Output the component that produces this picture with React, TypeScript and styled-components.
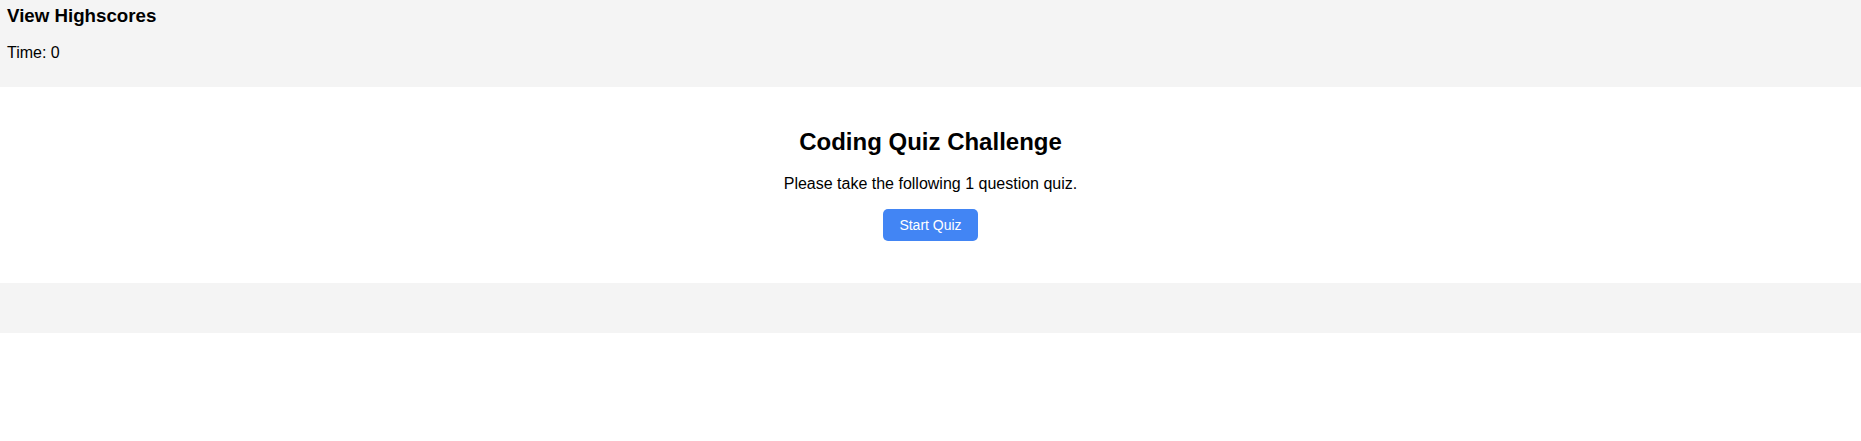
import React from 'react';
import styled, { createGlobalStyle } from 'styled-components';

const GlobalStyle = createGlobalStyle`
  body {
    margin: 0;
    font-family: "Liberation Sans", Arial, sans-serif;
    color: #000;
    background: #fff;
  }
`

export const Header = styled.header`
  background: #f4f4f4;
  padding: 5px 7px 9px;
`

export const HighscoresLink = styled.h3`
  font-size: 18.72px;
  font-weight: bold;
  margin: 0 0 17px;
  cursor: pointer;
`

export const Timer = styled.p`
  font-size: 16px;
  margin: 0 0 16px;
`

export const Main = styled.main`
  display: flex;
  flex-direction: column;
  align-items: center;
  text-align: center;
  padding: 21px 0 22px;
`

export const Title = styled.h2`
  font-size: 24px;
  font-weight: bold;
  margin: 20px 0 19px;
`

export const Intro = styled.p`
  font-size: 16px;
  margin: 0 0 16px;
`

export const StartButton = styled.button`
  font-family: "Liberation Sans", Arial, sans-serif;
  font-size: 14px;
  color: #fff;
  background: #4285f4;
  border: none;
  border-radius: 5px;
  padding: 8px 16px;
  margin-bottom: 20px;
  cursor: pointer;
`

export const Footer = styled.footer`
  background: #f4f4f4;
  height: 50px;
`

function App() {
  const [time] = React.useState(0);
  const questionCount = 1;

  return (
    <>
      <GlobalStyle />
      <Header>
        <HighscoresLink>View Highscores</HighscoresLink>
        <Timer>Time: {time}</Timer>
      </Header>
      <Main>
        <Title>Coding Quiz Challenge</Title>
        <Intro>Please take the following {questionCount} question quiz.</Intro>
        <StartButton>Start Quiz</StartButton>
      </Main>
      <Footer />
    </>
  );
}

export default App;
